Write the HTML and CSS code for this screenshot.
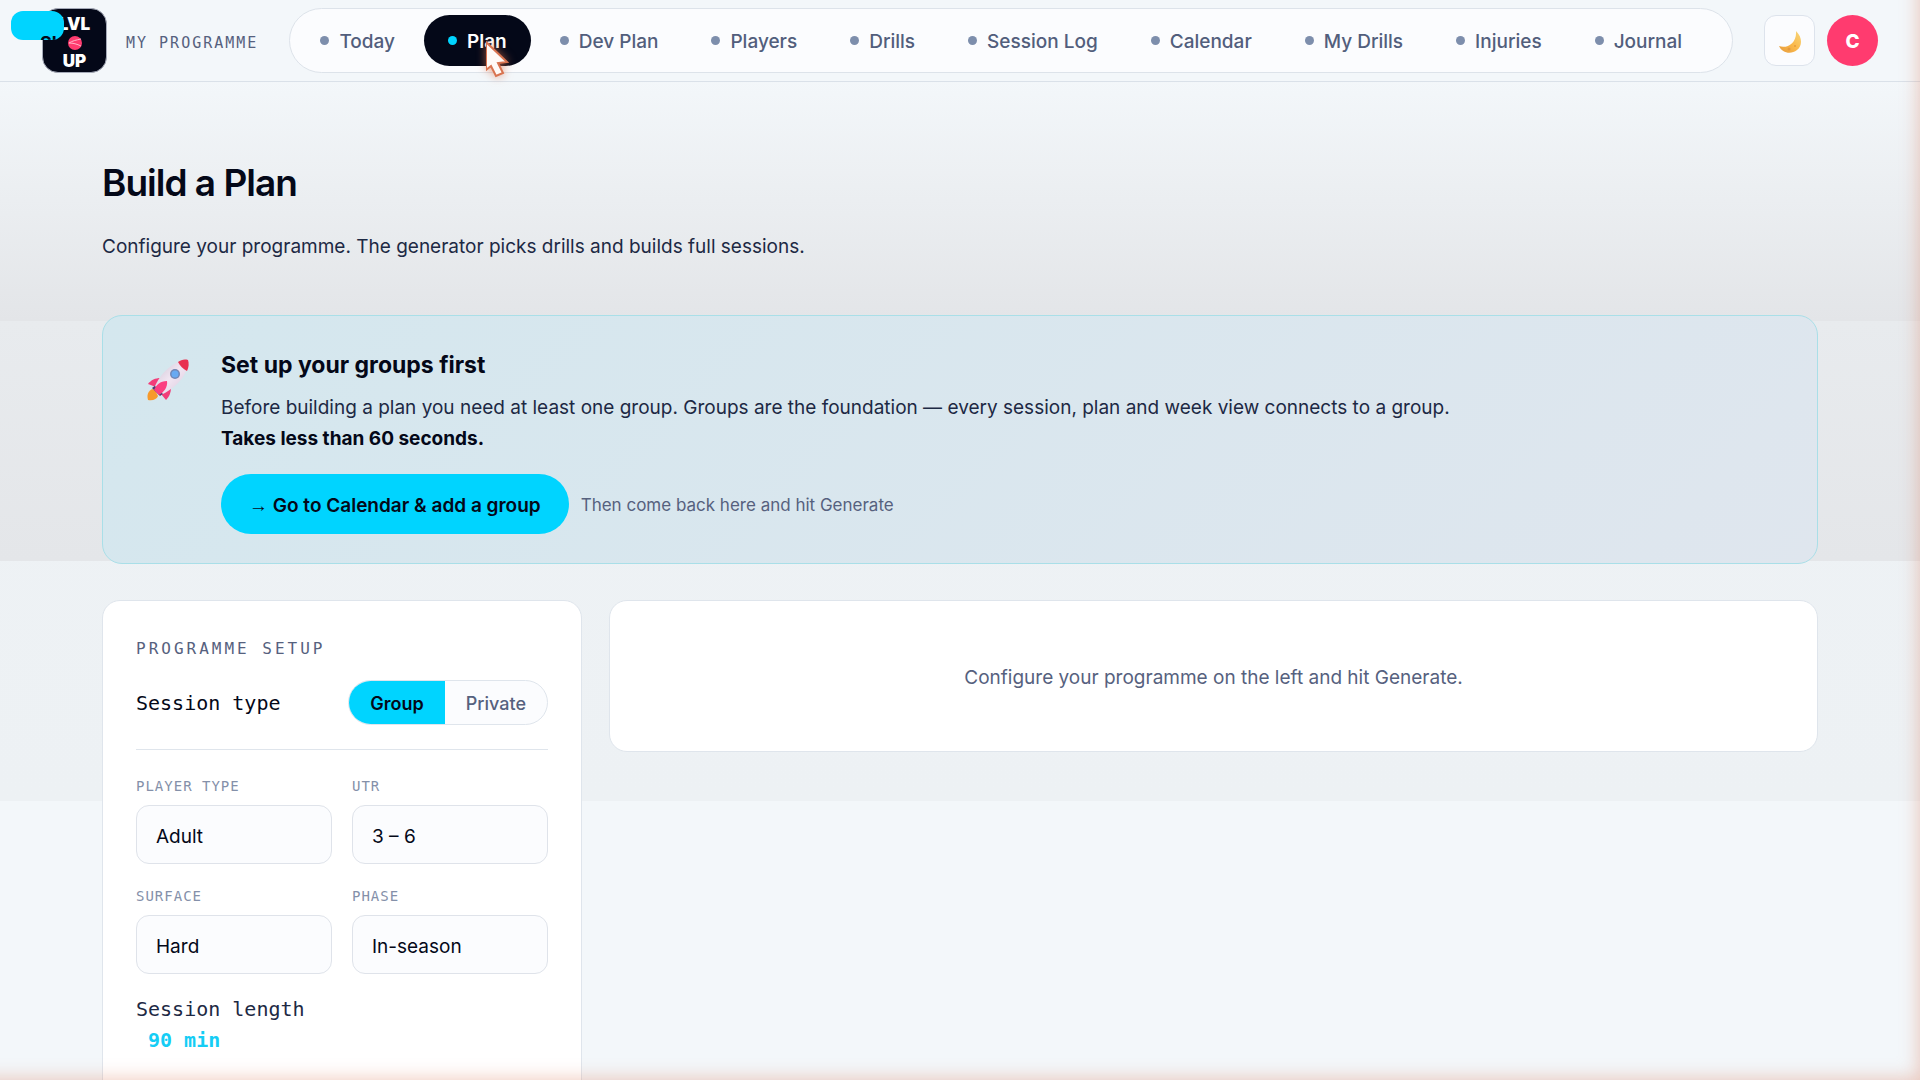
FILE: index.html
```html
<!doctype html>
<html lang="en">
  <head>
    <meta charset="UTF-8" />
    <meta name="viewport" content="width=device-width, initial-scale=1.0" />
    <title>LVL UP - Build a Plan</title>
    <link rel="stylesheet" href="styles.css">
  </head>
  <body>
    <a class="skip-link" href="#main">Skip</a>

    <header class="topbar">
      <a class="logo" href="#" aria-label="LVL UP">
        <span>LVL</span>
        <svg class="logo-ball" viewBox="0 0 14 14" aria-hidden="true">
          <circle cx="7" cy="7" r="7" fill="#ff3b6f" />
          <path d="M13 3C8 4 4 5 1 7C5 7 9 8 13 10" stroke="#ffb3c6" fill="none" />
        </svg>
        <span>UP</span>
      </a>
      <span class="programme">MY PROGRAMME</span>

      <nav class="nav">
        <a href="#">Today</a>
        <a href="#" class="active">Plan</a>
        <a href="#">Dev Plan</a>
        <a href="#">Players</a>
        <a href="#">Drills</a>
        <a href="#">Session Log</a>
        <a href="#">Calendar</a>
        <a href="#">My Drills</a>
        <a href="#">Injuries</a>
        <a href="#">Journal</a>
      </nav>

      <div class="actions">
        <button class="theme-btn" aria-label="Toggle theme">
          <svg viewBox="0 0 24 24" width="24" height="24" aria-hidden="true">
            <defs>
              <linearGradient id="moon" x1="0" y1="1" x2="1" y2="0">
                <stop offset="0" stop-color="#e59a3c" />
                <stop offset="0.500" stop-color="#fbb94b" />
                <stop offset="1" stop-color="#f6d77c" />
              </linearGradient>
            </defs>
            <path d="M18 1C25 8 24 16 19 20C13 25 4 23 1 16C9 19 19 13 18 1Z" fill="url(#moon)" />
            <circle cx="11" cy="19" r="1.500" fill="#e59a3c" />
            <circle cx="17" cy="16" r="1" fill="#e59a3c" />
          </svg>
        </button>
        <button class="avatar" aria-label="Account">C</button>
      </div>
    </header>

    <main id="main" class="page">
      <h1>Build a Plan</h1>
      <p class="lead">Configure your programme. The generator picks drills and builds full sessions.</p>

      <section class="banner">
        <svg class="rocket" viewBox="0 0 44 42" aria-hidden="true">
          <defs>
            <linearGradient id="hull" x1="0" y1="0" x2="1" y2="1">
              <stop offset="0" stop-color="#c9c2d2" />
              <stop offset="0.500" stop-color="#f1e6f2" />
              <stop offset="1" stop-color="#d9c6dc" />
            </linearGradient>
          </defs>
          <path d="M6 30C1 33 1 37 2 41C7 42 11 40 12 37L9 31Z" fill="#f79a2b" />
          <path d="M15 19C9 19 5 21 2 25L10 28Z" fill="#f23d79" />
          <path d="M25 28C25 34 23 38 20 41L15 35Z" fill="#f23d79" />
          <path d="M6 29 14 37 18 34 10 26Z" fill="#4b3c72" />
          <path d="M42 1C29 1 16 12 9 27L17 35C32 27 43 14 42 1Z" fill="url(#hull)" />
          <path d="M42 1C38 0 35 1 32 3C34 7 37 10 41 12C43 8 43 4 42 1Z" fill="#e8304f" />
          <path d="M21 22C14 22 10 26 8 31L13 36C18 33 22 28 21 22Z" fill="#fb3f80" />
          <circle cx="29" cy="15" r="5" fill="#7187b5" />
          <circle cx="29" cy="15" r="3.500" fill="#68aaf2" />
        </svg>
        <div class="banner-body">
          <h2>Set up your groups first</h2>
          <p>
            Before building a plan you need at least one group. Groups are the foundation — every session, plan and week view connects to a group.<br />
            <strong>Takes less than 60 seconds.</strong>
          </p>
          <div class="banner-actions">
            <button class="primary"><span class="arrow">→</span> Go to Calendar &amp; add a group</button>
            <span class="hint">Then come back here and hit Generate</span>
          </div>
        </div>
      </section>

      <div class="columns">
        <form class="card setup">
          <h3>PROGRAMME SETUP</h3>
          <div class="type-row">
            <span class="row-label">Session type</span>
            <div class="toggle">
              <button type="button" class="on">Group</button>
              <button type="button">Private</button>
            </div>
          </div>
          <div class="fields">
            <div class="field">
              <label for="playerType">PLAYER TYPE</label>
              <select id="playerType"><option>Adult</option></select>
            </div>
            <div class="field">
              <label for="utr">UTR</label>
              <select id="utr"><option>3 – 6</option></select>
            </div>
            <div class="field">
              <label for="surface">SURFACE</label>
              <select id="surface"><option>Hard</option></select>
            </div>
            <div class="field">
              <label for="phase">PHASE</label>
              <select id="phase"><option>In-season</option></select>
            </div>
          </div>
          <div class="length">
            <span>Session length</span>
            <output>90 min</output>
          </div>
        </form>

        <section class="card empty">Configure your programme on the left and hit Generate.</section>
      </div>
    </main>

    <div class="edge-glow"></div>
    <svg class="cursor" viewBox="0 0 30 42" aria-hidden="true">
      <path d="M0 3 21 23 12 24 17 34 10 37 5 27 0 31Z" fill="#fffaf7" stroke="#d9734f" stroke-width="2" />
    </svg>
  </body>
</html>
```
FILE: styles.css
```css
* {
  box-sizing: border-box;
}
body {
  margin: 0;
  height: 100vh;
  overflow: hidden;
  font-family: Inter, sans-serif;
  font-size: 19px;
  color: #040818;
  background-color: #f3f7fa;
  background-image:
    linear-gradient(#f3f7fa 80px, #e3e5e8 320px),
    linear-gradient(#e8ebee 320px, #e4e6e9),
    linear-gradient(#eff3f6, #edf1f4);
  background-size: 100% 321px, 100% 561px, 100% 801px;
  background-repeat: no-repeat;
}
button,
select {
  font-family: inherit;
}
button {
  cursor: pointer;
}
.skip-link {
  position: absolute;
  top: 11px;
  left: 11px;
  z-index: 3;
  width: 53px;
  height: 29px;
  padding: 23px 0 0 29px;
  overflow: hidden;
  border-radius: 12px;
  background: #00d4ff;
  color: #040818;
  font-size: 18px;
  font-weight: 700;
  line-height: 18px;
  text-decoration: none;
}

/* top bar */
.topbar {
  display: flex;
  align-items: center;
  height: 82px;
  padding: 0 42px;
  background: #f3f7fa;
  border-bottom: 1px solid #dae1e9;
}
.logo {
  display: flex;
  flex-direction: column;
  align-items: center;
  justify-content: space-between;
  width: 65px;
  height: 65px;
  padding: 7px 0 2px;
  border: 1px solid #a5aab8;
  border-radius: 16px;
  background: #040818;
  color: #fff;
  font-size: 17px;
  font-weight: 900;
  line-height: 17px;
  text-decoration: none;
}
.logo-ball {
  width: 14px;
  height: 14px;
}
.programme {
  margin: 4px 31px 0 19px;
  font-family: "DejaVu Sans Mono", monospace;
  font-size: 15px;
  letter-spacing: 2px;
  color: #56617e;
}
.nav {
  display: flex;
  flex: 1;
  gap: 5px;
  padding: 6px;
  border: 1px solid #dde3ea;
  border-radius: 33px;
  background: #fbfcfe;
}
.nav a {
  display: flex;
  align-items: center;
  gap: 10px;
  height: 51px;
  padding: 2px 24px 0;
  border-radius: 26px;
  color: #525e7c;
  font-weight: 500;
  white-space: nowrap;
  text-decoration: none;
}
.nav a::before {
  content: "";
  width: 9px;
  height: 9px;
  margin-bottom: 2px;
  border-radius: 50%;
  background: #7d8eac;
}
.nav .active {
  background: #040818;
  color: #fff;
  font-weight: 600;
}
.nav .active::before {
  background: #00d4ff;
}
.actions {
  display: flex;
  gap: 12px;
  margin-left: 31px;
}
.theme-btn,
.avatar {
  display: flex;
  align-items: center;
  justify-content: center;
  width: 51px;
  height: 51px;
  padding: 2px 0 0;
}
.theme-btn {
  border: 1px solid #dde3ec;
  border-radius: 12px;
  background: #fbfcfe;
}
.avatar {
  border: none;
  border-radius: 50%;
  background: #ff3b6f;
  color: #fff;
  font-size: 19px;
  font-weight: 800;
}

/* page */
.page {
  padding: 76px 102px 0;
}
h1 {
  margin: 0;
  font-size: 37px;
  font-weight: 600;
  line-height: 50px;
  letter-spacing: -1px;
}
.lead {
  margin: 23px 0 0;
  line-height: 32px;
  color: #1d2944;
}
.banner {
  display: flex;
  gap: 31px;
  margin-top: 52px;
  padding: 32px 43px 29px;
  border: 1px solid #a9dfe8;
  border-radius: 20px;
  background: linear-gradient(135deg, #d4e7ee, #dfe6ee);
}
.rocket {
  width: 44px;
  height: 42px;
  margin-top: 11px;
}
.banner h2 {
  margin: 0;
  font-size: 23px;
  font-weight: 700;
  line-height: 34px;
}
.banner p {
  margin: 10px 0 20px;
  line-height: 31px;
  color: #1d2944;
}
.banner strong {
  color: #040818;
}
.banner-actions {
  display: flex;
  align-items: center;
  gap: 12px;
}
.primary {
  height: 60px;
  padding: 2px 28px 0;
  border: none;
  border-radius: 30px;
  background: #00d4ff;
  color: #040818;
  font-size: 19px;
  font-weight: 600;
}
.arrow {
  font-family: "Liberation Sans", sans-serif;
  font-weight: 400;
}
.hint {
  padding-top: 2px;
  font-size: 17px;
  color: #56617e;
}

/* cards */
.columns {
  display: grid;
  grid-template-columns: 480px 1fr;
  align-items: start;
  gap: 27px;
  margin-top: 36px;
}
.card {
  border: 1px solid #dfe5ec;
  border-radius: 18px;
  background: #fff;
}
.setup {
  padding: 33px 33px 60px;
}
h3 {
  margin: 0;
  font-family: "DejaVu Sans Mono", monospace;
  font-size: 16px;
  font-weight: 400;
  line-height: 30px;
  letter-spacing: 3px;
  color: #56617e;
}
.type-row {
  display: flex;
  align-items: center;
  justify-content: space-between;
  margin-bottom: 24px;
  padding: 16px 0 24px;
  border-bottom: 1px solid #dfe5ec;
}
.row-label,
.length {
  font-family: "DejaVu Sans Mono", monospace;
  font-size: 20px;
}
.toggle {
  display: flex;
  overflow: hidden;
  border: 1px solid #dfe5ec;
  border-radius: 23px;
  background: #fbfcfe;
}
.toggle button {
  height: 43px;
  padding: 2px 21px 0;
  border: none;
  background: none;
  color: #56617e;
  font-size: 18px;
  font-weight: 500;
}
.toggle .on {
  background: #00d4ff;
  color: #040818;
  font-weight: 600;
}
.fields {
  display: grid;
  grid-template-columns: 1fr 1fr;
  gap: 20px;
}
.field label {
  display: block;
  margin-bottom: 7px;
  font-family: "DejaVu Sans Mono", monospace;
  font-size: 14px;
  line-height: 24px;
  letter-spacing: 1px;
  color: #8490a9;
}
.field select {
  width: 100%;
  height: 59px;
  padding: 3px 19px 0;
  appearance: none;
  border: 1px solid #dfe3ea;
  border-radius: 13px;
  background: #fbfcfe;
  color: #040818;
  font-size: 19px;
}
.length {
  margin-top: 20px;
  line-height: 31px;
  color: #1d2944;
}
.length output {
  display: block;
  padding-left: 12px;
  font-weight: 700;
  color: #15cdf5;
}
.empty {
  padding: 61px 30px 58px;
  line-height: 31px;
  text-align: center;
  color: #56617e;
}

/* overlays */
.edge-glow {
  position: fixed;
  inset: -40px 0 0 -40px;
  z-index: 4;
  pointer-events: none;
  box-shadow: inset -4px -4px 18px -2px rgba(217, 115, 79, 0.35);
}
.cursor {
  position: absolute;
  top: 39px;
  left: 486px;
  z-index: 5;
  width: 30px;
  height: 42px;
  filter: drop-shadow(0 0 5px rgba(217, 115, 79, 0.7));
}
```
